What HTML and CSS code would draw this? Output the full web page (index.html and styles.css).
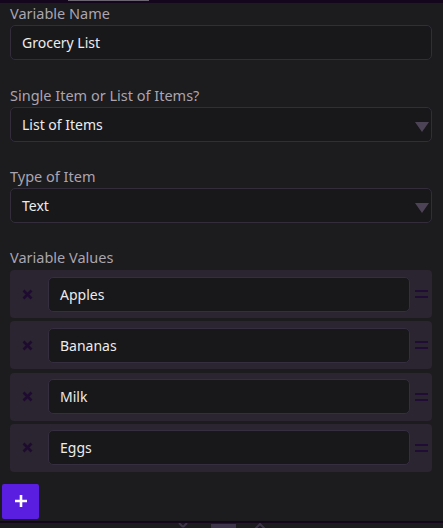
FILE: index.html
```html
<!DOCTYPE html>
<html>
<head>
<meta charset="utf-8">
<link rel="stylesheet" href="styles.css">
</head>
<body>
<div class="topbar"><span class="tab"></span></div>
<main class="form">
  <div class="field first">
    <label class="label">Variable Name</label>
    <div class="input">Grocery List</div>
  </div>
  <div class="field">
    <label class="label">Single Item or List of Items?</label>
    <div class="input select">List of Items<span class="caret"></span></div>
  </div>
  <div class="field">
    <label class="label">Type of Item</label>
    <div class="input select">Text<span class="caret"></span></div>
  </div>
  <div class="field values">
    <label class="label">Variable Values</label>
    <div class="rows">
      <div class="row">
        <span class="remove"><svg width="11" height="11" viewBox="0 0 11 11"><path d="M1.5 1.5L9.5 9.5M9.5 1.5L1.5 9.5" stroke="#1f0a30" stroke-width="2.5"/></svg></span>
        <div class="input item">Apples</div>
        <span class="handle"></span>
      </div>
      <div class="row">
        <span class="remove"><svg width="11" height="11" viewBox="0 0 11 11"><path d="M1.5 1.5L9.5 9.5M9.5 1.5L1.5 9.5" stroke="#1f0a30" stroke-width="2.5"/></svg></span>
        <div class="input item">Bananas</div>
        <span class="handle"></span>
      </div>
      <div class="row">
        <span class="remove"><svg width="11" height="11" viewBox="0 0 11 11"><path d="M1.5 1.5L9.5 9.5M9.5 1.5L1.5 9.5" stroke="#1f0a30" stroke-width="2.5"/></svg></span>
        <div class="input item">Milk</div>
        <span class="handle"></span>
      </div>
      <div class="row">
        <span class="remove"><svg width="11" height="11" viewBox="0 0 11 11"><path d="M1.5 1.5L9.5 9.5M9.5 1.5L1.5 9.5" stroke="#1f0a30" stroke-width="2.5"/></svg></span>
        <div class="input item">Eggs</div>
        <span class="handle"></span>
      </div>
    </div>
  </div>
  <button class="add"><svg width="14" height="14" viewBox="0 0 14 14"><path d="M7 1V13M1 7H13" stroke="#ffffff" stroke-width="2.6"/></svg></button>
</main>
<footer class="bottom">
  <svg class="bicons" width="100" height="6" viewBox="0 0 100 6">
    <path d="M2 0L6 4M10 0L6 4" stroke="#3c3448" stroke-width="2"/>
    <rect x="34" y="1" width="25" height="5" fill="#3c3448"/>
    <path d="M78 6L83 1L88 6" stroke="#3c3448" stroke-width="2" fill="none"/>
  </svg>
</footer>
</body>
</html>
```
FILE: styles.css
```css
html, body {
  margin: 0;
  padding: 0;
  background: #1c1b1e;
  width: 443px;
  height: 528px;
  overflow: hidden;
  font-family: "Noto Sans", "Open Sans", sans-serif;
}
.topbar {
  height: 3px;
  background: #14061c;
  position: relative;
}
.tab {
  position: absolute;
  left: 68px;
  top: 0;
  width: 81px;
  height: 1px;
  background: #6a6570;
}
.form {
  display: flex;
  flex-direction: column;
  padding: 0 11px 0 10px;
  height: 518px;
  box-sizing: border-box;
}
.field {
  display: flex;
  flex-direction: column;
  margin-bottom: 24px;
}
.field.first { margin-bottom: 25px; }
.label {
  color: #aaa5b0;
  font-size: 14.5px;
  line-height: 20px;
  height: 22px;
}
.input {
  height: 35px;
  box-sizing: border-box;
  border: 1px solid #322c3b;
  border-radius: 5px;
  background: #18171a;
  color: #ececec;
  font-size: 14px;
  padding: 0 11px;
  display: flex;
  align-items: center;
  position: relative;
}
.select .caret {
  position: absolute;
  right: 2px;
  top: 14px;
  width: 0;
  height: 0;
  border-left: 7px solid transparent;
  border-right: 7px solid transparent;
  border-top: 10px solid #4c4456;
}
.values { margin-bottom: 0; }
.values .label { margin-bottom: 1px; }
.rows {
  display: flex;
  flex-direction: column;
  gap: 3.3px;
}
.row {
  height: 48px;
  background: #2a2530;
  border-radius: 4px;
  display: flex;
  align-items: center;
  padding: 0 4px 0 12px;
  box-sizing: border-box;
}
.remove {
  width: 26px;
  display: flex;
  justify-content: flex-start;
}
.item {
  flex: 1;
  height: 35px;
  margin-right: 5px;
  padding-left: 11px;
  border-color: #352d40;
}
.handle {
  width: 13px;
  height: 8px;
  border-top: 2px solid #200c34;
  border-bottom: 2px solid #200c34;
  box-sizing: border-box;
}
.add {
  margin-top: 12px;
  margin-left: -8px;
  width: 37px;
  height: 35px;
  border: none;
  border-radius: 2px;
  background: #5a1ee0;
  display: flex;
  align-items: center;
  justify-content: center;
  padding: 0;
}
.bottom {
  height: 7px;
  border-top: 2px solid #14061c;
  box-sizing: border-box;
  position: relative;
}
.bicons {
  position: absolute;
  left: 177px;
  top: 0;
}
```
